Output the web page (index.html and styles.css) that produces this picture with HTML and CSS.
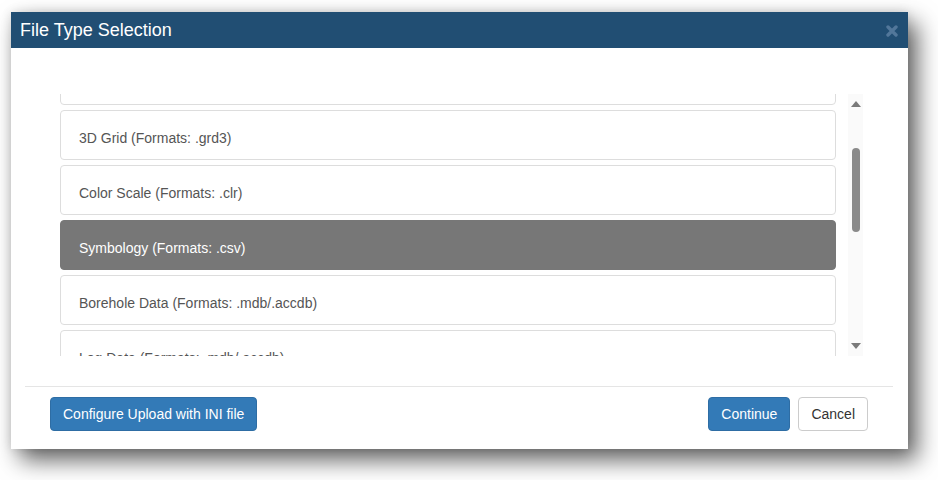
FILE: index.html
```html
<!DOCTYPE html>
<html>
<head>
<meta charset="utf-8">
<link rel="stylesheet" href="styles.css">
</head>
<body>
<div class="modal">
  <div class="modal-header">
    <h4 class="modal-title">File Type Selection</h4>
    <span class="close" aria-label="Close">
      <svg width="12" height="12" viewBox="0 0 12 12"><path d="M2 2 L10 10 M10 2 L2 10" stroke="#52779a" stroke-width="3.4" stroke-linecap="round"/></svg>
    </span>
  </div>
  <div class="modal-body">
    <div class="list-viewport">
      <div class="list">
        <a class="item">Grid (Formats: .grd)</a>
        <a class="item">3D Grid (Formats: .grd3)</a>
        <a class="item">Color Scale (Formats: .clr)</a>
        <a class="item active">Symbology (Formats: .csv)</a>
        <a class="item">Borehole Data (Formats: .mdb/.accdb)</a>
        <a class="item">Log Data (Formats: .mdb/.accdb)</a>
      </div>
    </div>
    <div class="scrollbar">
      <span class="arrow up"></span>
      <div class="track"><div class="thumb"></div></div>
      <span class="arrow down"></span>
    </div>
  </div>
  <div class="modal-footer">
    <button class="btn btn-primary">Configure Upload with INI file</button>
    <div class="right">
      <button class="btn btn-primary">Continue</button>
      <button class="btn btn-default">Cancel</button>
    </div>
  </div>
</div>
</body>
</html>
```

FILE: styles.css
```css
* { box-sizing: border-box; }
html, body { margin: 0; padding: 0; background: #fff; height: 100%; }
body {
  font-family: "Liberation Sans", Arial, Helvetica, sans-serif;
  font-size: 14px;
  line-height: 20px;
  color: #333;
  padding: 12px 0 0 11px;
  min-height: 480px;
}
.modal {
  width: 897px;
  height: 437px;
  background: #fff;
  box-shadow: 9px 11px 22px rgba(0,0,0,0.62), 0 0 10px rgba(0,0,0,0.12);
  display: flex;
  flex-direction: column;
}
.modal-header {
  height: 36px;
  flex: none;
  background: #214e73;
  display: flex;
  align-items: center;
  justify-content: space-between;
  padding: 0 10px 0 9px;
}
.modal-title {
  margin: 0;
  font-size: 18px;
  font-weight: normal;
  color: #fff;
  line-height: 20px;
}
.close { display: flex; align-items: center; padding-top: 1px; }
.modal-body {
  display: flex;
  flex: none;
  padding: 46px 45px 30px 49px;
  gap: 12px;
}
.list-viewport {
  width: 776px;
  height: 262px;
  overflow: hidden;
}
.list { margin-top: -39px; display: flex; flex-direction: column; gap: 5px; }
.item {
  display: block;
  height: 50px;
  flex: none;
  border: 1px solid #ddd;
  border-radius: 4px;
  padding: 17px 18px 11px;
  color: #555;
  text-decoration: none;
  white-space: nowrap;
}
.item.active {
  background: #777;
  border-color: #777;
  color: #fff;
}
.scrollbar {
  width: 15px;
  height: 262px;
  background: #fafafa;
  display: flex;
  flex-direction: column;
  align-items: center;
  padding: 7px 0 7px;
}
.arrow { width: 0; height: 0; border-left: 5px solid transparent; border-right: 5px solid transparent; }
.arrow.up { border-bottom: 6px solid #7a7a7a; }
.arrow.down { border-top: 6px solid #7a7a7a; }
.track { flex: 1; width: 8px; padding-top: 41px; }
.thumb { width: 8px; height: 84px; background: #8a8a8a; border-radius: 4px; }
.modal-footer {
  margin: 0 15px 0 14px;
  border-top: 1px solid #e5e5e5;
  padding: 10px 25px 0 25px;
  display: flex;
  justify-content: space-between;
}
.right { display: flex; gap: 8px; }
.btn {
  font-family: inherit;
  font-size: 14px;
  line-height: 20px;
  height: 34px;
  padding: 6px 12px;
  border-radius: 4px;
  border: 1px solid transparent;
  cursor: pointer;
}
.btn-primary { background: #337ab7; border-color: #2e6da4; color: #fff; }
.btn-default { background: #fff; border-color: #ccc; color: #333; }
```
